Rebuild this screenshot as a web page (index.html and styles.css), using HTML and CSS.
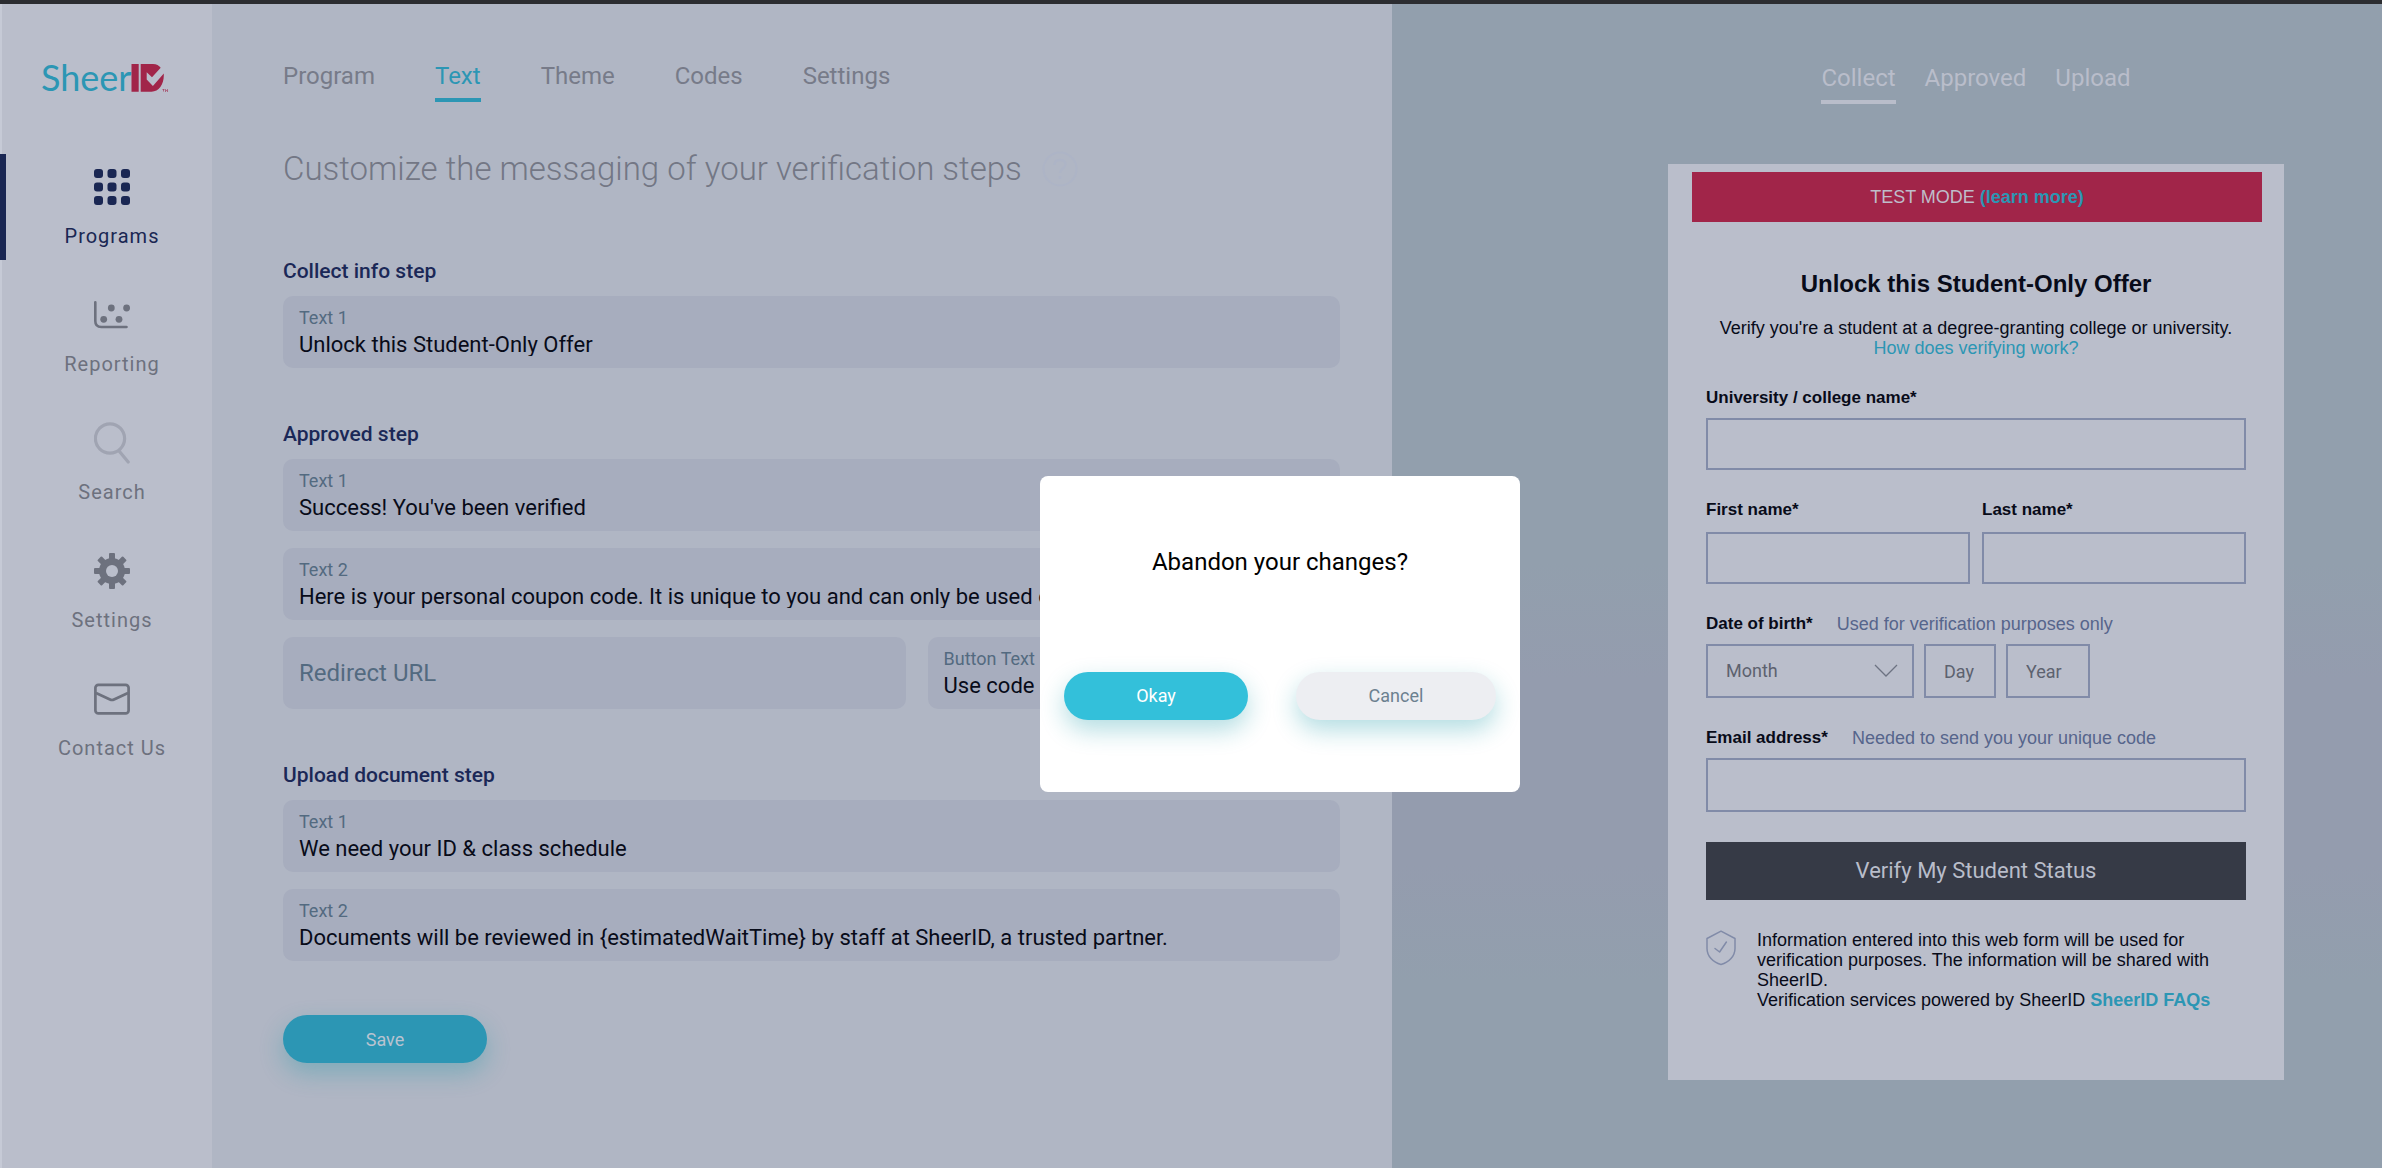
FILE: index.html
```html
<!DOCTYPE html>
<html lang="en">
<head>
<meta charset="utf-8">
<title>SheerID – Program text</title>
<link rel="stylesheet" href="styles.css">
</head>
<body>
<div class="app">
  <aside class="sidebar">
    <a class="logo" href="#" aria-label="SheerID home">
      <svg width="128" height="32" viewBox="0 0 128 32">
        <text class="logo-word" x="-1" y="29">Sheer</text>
        <path fill="#a12549" d="M89.500 2h7.200v27.700h-7.200zM98.700 2h12.300c3.500 0 6 1.500 7.700 3.700L110 15.300l-5.300-5v7.200l6.200 6.500L121.800 11.500v2c0 9-5 16.200-12.300 16.200H98.700z"/>
        <path fill="none" stroke="#a12549" d="M120.500 27.500h2M121.500 27.500v2M123.500 30v-2.500l1 1 1-1V30" stroke-width=".6"/>
      </svg>
    </a>
    <nav class="side-nav">
      <a class="side-item active" href="#">
        <span class="side-icon"><svg width="36" height="36" viewBox="0 0 36 36" fill="currentColor"><rect width="9" height="9" rx="3"/><rect x="13.500" width="9" height="9" rx="3"/><rect x="27" width="9" height="9" rx="3"/><rect y="13.500" width="9" height="9" rx="3"/><rect x="13.500" y="13.500" width="9" height="9" rx="3"/><rect x="27" y="13.500" width="9" height="9" rx="3"/><rect y="27" width="9" height="9" rx="3"/><rect x="13.500" y="27" width="9" height="9" rx="3"/><rect x="27" y="27" width="9" height="9" rx="3"/></svg></span>
        Programs
      </a>
      <a class="side-item" href="#">
        <span class="side-icon"><svg width="36" height="28" viewBox="0 0 36 28" fill="currentColor"><path d="M1.300 1.300V20q0 6 6 6H32.500" fill="none" stroke="currentColor" stroke-width="2.600" stroke-linecap="round"/><circle cx="17.300" cy="7" r="3.400"/><circle cx="32.600" cy="7" r="3.400"/><circle cx="9.700" cy="18.300" r="3.400"/><circle cx="25" cy="18.300" r="3.400"/></svg></span>
        Reporting
      </a>
      <a class="side-item" href="#">
        <span class="side-icon faded"><svg width="36" height="42" viewBox="0 0 36 42" fill="none" stroke="currentColor" stroke-width="3.200" stroke-linecap="round"><circle cx="16" cy="16.500" r="14.600"/><path d="M25.500 29.500 34.200 40"/></svg></span>
        Search
      </a>
      <a class="side-item" href="#">
        <span class="side-icon"><svg width="36" height="36" viewBox="-18 -18 36 36"><g fill="currentColor"><rect x="-3" y="-18" width="6" height="36" rx="1"/><rect x="-3" y="-18" width="6" height="36" rx="1" transform="rotate(45)"/><rect x="-3" y="-18" width="6" height="36" rx="1" transform="rotate(90)"/><rect x="-3" y="-18" width="6" height="36" rx="1" transform="rotate(135)"/><circle r="13"/></g><circle r="6" fill="#babecb"/></svg></span>
        Settings
      </a>
      <a class="side-item" href="#">
        <span class="side-icon"><svg width="36" height="32" viewBox="0 0 36 32" fill="none" stroke="currentColor" stroke-width="2.700"><rect x="1.400" y="1.800" width="33.200" height="28.600" rx="3"/><path d="M2 10l14 6.500q2 1 4 0L34 10"/></svg></span>
        Contact Us
      </a>
    </nav>
  </aside>

  <main class="editor">
    <nav class="tabs">
      <a href="#">Program</a>
      <a class="active" href="#">Text</a>
      <a href="#">Theme</a>
      <a href="#">Codes</a>
      <a href="#">Settings</a>
    </nav>
    <h1 class="title">Customize the messaging of your verification steps
      <svg class="help" width="36" height="36" viewBox="0 0 36 36" fill="none" stroke="currentColor" stroke-width="2"><circle cx="18" cy="18" r="16.500"/><path d="M12.500 14q0-5 5.500-5t5.500 4.500c0 4-5.500 4-5.500 8.500M18 25v3" stroke-width="2.500"/></svg>
    </h1>

    <form class="steps">
      <section class="step">
        <h2>Collect info step</h2>
        <label class="field"><span>Text 1</span><input type="text" value="Unlock this Student-Only Offer"></label>
      </section>
      <section class="step">
        <h2>Approved step</h2>
        <label class="field"><span>Text 1</span><input type="text" value="Success! You've been verified"></label>
        <label class="field"><span>Text 2</span><input type="text" value="Here is your personal coupon code. It is unique to you and can only be used once."></label>
        <div class="field-row">
          <label class="field field-empty"><input type="text" placeholder="Redirect URL" aria-label="Redirect URL"></label>
          <label class="field"><span>Button Text</span><input type="text" value="Use code now"></label>
        </div>
      </section>
      <section class="step">
        <h2>Upload document step</h2>
        <label class="field"><span>Text 1</span><input type="text" value="We need your ID &amp; class schedule"></label>
        <label class="field"><span>Text 2</span><input type="text" value="Documents will be reviewed in {estimatedWaitTime} by staff at SheerID, a trusted partner."></label>
      </section>
      <button class="pill save" type="button">Save</button>
    </form>
  </main>

  <section class="preview">
    <nav class="tabs preview-tabs">
      <a class="active" href="#">Collect</a>
      <a href="#">Approved</a>
      <a href="#">Upload</a>
    </nav>
    <div class="card">
      <p class="banner">TEST MODE <a href="#">(learn more)</a></p>
      <form class="verify">
        <h2>Unlock this Student-Only Offer</h2>
        <p class="intro">Verify you're a student at a degree-granting college or university.<br><a href="#">How does verifying work?</a></p>
        <div class="group">
          <label for="college">University / college name*</label>
          <input id="college" type="text">
        </div>
        <div class="names">
          <div class="group"><label for="first">First name*</label><input id="first" type="text"></div>
          <div class="group"><label for="last">Last name*</label><input id="last" type="text"></div>
        </div>
        <div class="group">
          <div class="label-row"><label for="month">Date of birth*</label><span>Used for verification purposes only</span></div>
          <div class="dob">
            <span class="select">
              <select id="month"><option>Month</option></select>
              <svg width="24" height="14" viewBox="0 0 24 14" fill="none" stroke="#6d7382" stroke-width="1.300"><path d="M1 1l11 11L23 1"/></svg>
            </span>
            <input class="day" type="text" placeholder="Day" aria-label="Day">
            <input class="year" type="text" placeholder="Year" aria-label="Year">
          </div>
        </div>
        <div class="group">
          <div class="label-row"><label for="email">Email address*</label><span>Needed to send you your unique code</span></div>
          <input id="email" class="tall" type="email">
        </div>
        <button class="submit" type="button">Verify My Student Status</button>
        <div class="notice">
          <svg width="30" height="36" viewBox="0 0 30 36" fill="none" stroke="#818ba8" stroke-width="1.500" stroke-linejoin="round"><path d="M15 1.200L29 8.500V18.500C29 26 23 32.500 15 34.500C7 32.500 1 26 1 18.500V8.500z"/><path d="M9 18.500l4.600 3.500 6.800-10" stroke-linecap="round"/></svg>
          <p>Information entered into this web form will be used for verification purposes. The information will be shared with SheerID.<br>Verification services powered by SheerID <a href="#">SheerID FAQs</a></p>
        </div>
      </form>
    </div>
  </section>
</div>

<div class="overlay">
  <div class="modal" role="dialog" aria-modal="true" aria-labelledby="modal-title">
    <p id="modal-title">Abandon your changes?</p>
    <div class="modal-actions">
      <button class="pill okay" type="button">Okay</button>
      <button class="pill cancel" type="button">Cancel</button>
    </div>
  </div>
</div>
</body>
</html>
```
FILE: styles.css
```css
* { box-sizing: border-box; }
body {
  margin: 0;
  font-family: Roboto, "Liberation Sans", sans-serif;
  color: #080b19;
}
h1, h2, p { margin: 0; }
a { color: inherit; text-decoration: none; }
svg { display: block; flex: none; }
button, input, select { font: inherit; color: inherit; margin: 0; }

.app {
  display: grid;
  grid-template-columns: 212px minmax(0, 1180fr) minmax(0, 990fr);
  min-height: 100vh;
  border-top: 4px solid #2c2d31;
}

/* Sidebar */
.sidebar {
  background: linear-gradient(90deg, #c6cad6 2px, #babecb 2px);
  padding-top: 58px;
}
.logo { display: block; margin-left: 42px; height: 32px; }
.logo svg { overflow: visible; }
.logo-word {
  font-family: Lato, sans-serif;
  font-size: 36px;
  fill: #2c96b4;
}
.side-nav {
  display: flex;
  flex-direction: column;
  gap: 22px;
  margin-top: 60px;
}
.side-item {
  display: flex;
  flex-direction: column;
  align-items: center;
  height: 106px;
  padding: 12px 0 0 6px;
  border-left: 6px solid transparent;
  font-size: 20px;
  line-height: 24px;
  letter-spacing: 1px;
  color: #6d717e;
}
.side-item.active { color: #1a2753; border-left-color: #1a2753; }
.side-icon {
  display: flex;
  align-items: center;
  height: 42px;
  margin-bottom: 16px;
}
.faded { color: #a0a4b2; }

/* Editor */
.editor {
  background: #b0b6c4;
  padding: 58px 52px 60px 71px;
}
.tabs {
  display: flex;
  gap: 60px;
  font-size: 24px;
  line-height: 28px;
  color: #777b89;
}
.tabs a { padding-bottom: 8px; border-bottom: 4px solid transparent; }
.tabs .active { color: #2c96b4; border-bottom-color: #2c96b4; }
.title {
  display: flex;
  align-items: center;
  gap: 20px;
  margin: 47px 0 70px;
  font-size: 33px;
  font-weight: 300;
  line-height: 40px;
  color: #737785;
}
.help { color: #adb4c6; }
.steps { display: flex; flex-direction: column; gap: 54px; }
.step { display: flex; flex-direction: column; gap: 17px; }
.step h2 {
  margin-bottom: -4px;
  font-size: 21px;
  font-weight: 500;
  line-height: 24px;
  color: #1b2857;
}
.field {
  display: flex;
  flex-direction: column;
  justify-content: center;
  gap: 4px;
  height: 72px;
  padding: 0 16px;
  border-radius: 10px;
  background: #a7adbe;
  font-size: 18px;
  line-height: 20px;
  color: #536a80;
}
.field input {
  width: 100%;
  height: 24px;
  padding: 0;
  border: 0;
  background: none;
  outline: none;
  font-size: 22px;
  color: #080b19;
}
.field-row { display: grid; grid-template-columns: 622fr 412fr; gap: 22px; }
.field-empty input { height: 32px; font-size: 24px; }
.field-empty input::placeholder { color: #536a80; opacity: 1; }

.pill {
  height: 48px;
  padding: 0;
  border: 0;
  border-radius: 24px;
  font-size: 18px;
  box-shadow: 0 10px 24px rgba(20, 150, 165, .32);
}
.save { width: 204px; background: #2c96b4; color: #b9c3d0; }

/* Preview */
.preview {
  padding: 60px 98px 88px 276px;
  background: linear-gradient(#929fad 48%, #949cae 58%, #949cae 74%, #929fad 84%);
}
.preview-tabs { justify-content: center; gap: 29px; color: #b9bdca; }
.preview-tabs .active { color: #b9bdca; border-bottom-color: #b9bdca; }
.card {
  margin-top: 60px;
  padding: 8px 22px 70px 24px;
  background: #babecb;
  font-family: "Liberation Sans", Arial, sans-serif;
  font-size: 18px;
  line-height: 20px;
}
.card a { color: #2c96b4; }
.banner {
  padding: 15px 0;
  background: #a12549;
  color: #bfbdca;
  text-align: center;
}
.banner a { font-weight: 700; }
.verify {
  display: flex;
  flex-direction: column;
  gap: 30px;
  padding: 48px 16px 0 14px;
}
.verify h2 {
  margin-bottom: -10px;
  font-size: 24px;
  line-height: 28px;
  text-align: center;
}
.intro { text-align: center; }
.group { display: flex; flex-direction: column; gap: 10px; min-width: 0; }
.group label { font-size: 17px; font-weight: 700; }
.group input, .group select {
  width: 100%;
  height: 52px;
  padding: 0 18px;
  border: 2px solid #818ba8;
  border-radius: 0;
  background: none;
  outline: none;
  font-family: Roboto, sans-serif;
  color: #5d626f;
}
.group input::placeholder { color: #5d626f; opacity: 1; }
.names { display: grid; grid-template-columns: 1fr 1fr; gap: 12px; }
.names .group { gap: 12px; }
.label-row { display: flex; gap: 24px; color: #56658c; }
.label-row label { color: #080b19; }
.dob { display: flex; gap: 10px; }
.select { position: relative; width: 208px; }
.select svg { position: absolute; right: 16px; top: 20px; pointer-events: none; }
.group select { appearance: none; height: 54px; }
.group .day { width: 72px; height: 54px; }
.group .year { width: 84px; height: 54px; }
.group .tall { height: 54px; }
.submit {
  height: 58px;
  border: 0;
  background: #363a46;
  color: #b9bdca;
  font-family: Roboto, sans-serif;
  font-size: 22px;
}
.notice { display: flex; gap: 21px; }
.notice a { font-weight: 700; }

/* Dialog, centred on a canvas that runs past the right and bottom window edges */
.overlay {
  position: fixed;
  inset: 0 -178px -100px 0;
  display: flex;
  align-items: center;
  justify-content: center;
}
.modal {
  width: 480px;
  padding: 72px 24px;
  border-radius: 8px;
  background: #fff;
  color: #000;
  font-size: 24px;
  line-height: 28px;
  text-align: center;
}
.modal-actions { display: flex; gap: 48px; margin-top: 96px; }
.okay { flex: 184; background: #33c0da; color: #fff; }
.cancel { flex: 200; background: #edeef2; color: #6c8190; }
```
